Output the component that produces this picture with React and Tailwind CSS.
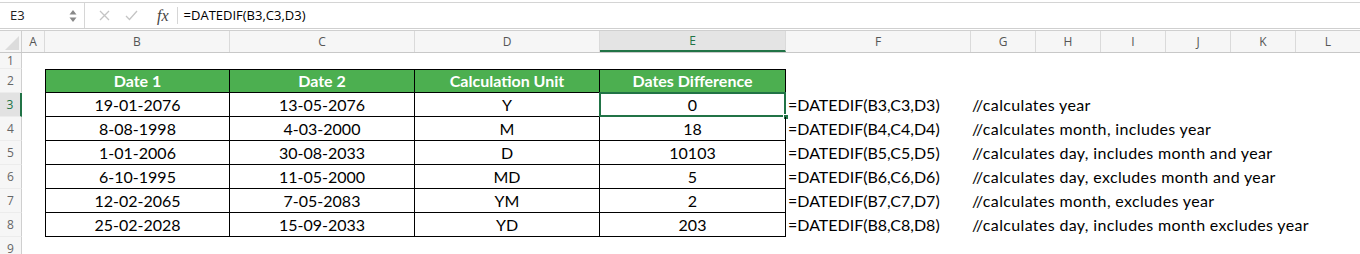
import React from 'react';

const cols = [
  { key: 'A', w: 23 },
  { key: 'B', w: 185 },
  { key: 'C', w: 185 },
  { key: 'D', w: 185 },
  { key: 'E', w: 186 },
  { key: 'F', w: 185 },
  { key: 'G', w: 65 },
  { key: 'H', w: 65 },
  { key: 'I', w: 65 },
  { key: 'J', w: 65 },
  { key: 'K', w: 65 },
  { key: 'L', w: 65 },
];

const headers = ['Date 1', 'Date 2', 'Calculation Unit', 'Dates Difference'];

const rows = [
  ['19-01-2076', '13-05-2076', 'Y', '0', '=DATEDIF(B3,C3,D3)', '//calculates year'],
  ['8-08-1998', '4-03-2000', 'M', '18', '=DATEDIF(B4,C4,D4)', '//calculates month, includes year'],
  ['1-01-2006', '30-08-2033', 'D', '10103', '=DATEDIF(B5,C5,D5)', '//calculates day, includes month and year'],
  ['6-10-1995', '11-05-2000', 'MD', '5', '=DATEDIF(B6,C6,D6)', '//calculates day, excludes month and year'],
  ['12-02-2065', '7-05-2083', 'YM', '2', '=DATEDIF(B7,C7,D7)', '//calculates month, excludes year'],
  ['25-02-2028', '15-09-2033', 'YD', '203', '=DATEDIF(B8,C8,D8)', '//calculates day, includes month excludes year'],
];

const cellFont = { fontFamily: 'Lato, "Open Sans", sans-serif' };

const RowHead = ({ n, h, active }) => (
  <div
    className={`w-[22px] shrink-0 flex items-center justify-center border-b border-[#ececec] text-[12px] ${
      active ? 'bg-[#e2e2e2] text-[#217346] border-r-2 border-r-[#217346]' : 'bg-[#f6f6f6] text-[#666] border-r border-r-[#cfcfcf]'
    } ${h}`}
    style={{ fontFamily: '"Open Sans", sans-serif' }}
  >
    {n}
  </div>
);

const FormulaBar = () => (
  <div className="h-[29px] border-t border-[#d4d4d4] mt-[2px] flex items-center bg-white border-b-[3px] border-b-[#cfcfcf] border-double">
    <div className="w-[85px] h-full flex items-center justify-between pl-[10px] pr-[7px] border-r border-[#d6d6d6]">
      <span className="text-[13px] text-[#222]" style={{ fontFamily: '"Open Sans", sans-serif' }}>E3</span>
      <svg width="8" height="16" viewBox="0 0 8 16">
        <path d="M4 2 L7.5 6.5 H0.5 Z" fill="#888" />
        <path d="M4 14 L7.5 9.5 H0.5 Z" fill="#888" />
      </svg>
    </div>
    <div className="flex items-center h-full">
      <svg className="ml-[14px]" width="11" height="11" viewBox="0 0 11 11">
        <path d="M1 1 L10 10 M10 1 L1 10" stroke="#c4c4c4" strokeWidth="1.3" />
      </svg>
      <svg className="ml-[15px]" width="13" height="11" viewBox="0 0 13 11">
        <path d="M1 6 L4.5 9.5 L12 1" stroke="#c4c4c4" strokeWidth="1.3" fill="none" />
      </svg>
      <span className="ml-[19px] text-[16px] italic text-[#444]" style={{ fontFamily: '"Liberation Serif", serif' }}>
        fx
      </span>
      <div className="ml-[8px] w-px h-[17px] bg-[#d6d6d6]" />
      <span className="ml-[6px] text-[13px] text-black" style={{ fontFamily: '"Open Sans", sans-serif' }}>
        =DATEDIF(B3,C3,D3)
      </span>
    </div>
  </div>
);

const ColumnHeader = () => (
  <div className="flex h-[22px] border-b border-[#c8c8c8] bg-[#f6f6f6]">
    <div className="w-[22px] shrink-0 relative border-r border-[#cfcfcf]">
      <svg className="absolute right-[2px] bottom-[2px]" width="14" height="14" viewBox="0 0 14 14">
        <path d="M14 0 L14 14 L0 14 Z" fill="#dcdcdc" />
      </svg>
    </div>
    {cols.map((c) => (
      <div
        key={c.key}
        className={`shrink-0 flex items-center justify-center text-[12px] border-r border-[#dadada] ${
          c.key === 'E' ? 'bg-[#e4e4e4] text-[#217346] border-b-2 border-b-[#217346]' : 'text-[#555]'
        }`}
        style={{ width: c.w, fontFamily: '"Open Sans", sans-serif' }}
      >
        {c.key}
      </div>
    ))}
  </div>
);

export default function App() {
  return (
    <div className="w-[1360px] h-[254px] overflow-hidden bg-white">
      <FormulaBar />
      <ColumnHeader />

      {/* row 1 */}
      <div className="flex">
        <RowHead n={1} h="h-[16px]" />
      </div>

      {/* row 2: table header */}
      <div className="flex h-[24px]">
        <RowHead n={2} h="h-[24px]" />
        <div className="w-[23px] shrink-0" />
        {headers.map((t, i) => (
          <div
            key={t}
            className={`shrink-0 flex items-center justify-center bg-[#4caf50] text-white font-bold text-[16px] border-t border-b border-r border-black ${
              i === 0 ? 'border-l' : ''
            }`}
            style={{ width: cols[i + 1].w, ...cellFont }}
          >
            {t}
          </div>
        ))}
      </div>

      {rows.map((r, ri) => (
        <div key={ri} className="flex h-[24px]">
          <RowHead n={ri + 3} h="h-[24px]" active={ri === 0} />
          <div className="w-[23px] shrink-0" />
          {r.slice(0, 4).map((v, ci) => (
            <div
              key={ci}
              className={`relative shrink-0 flex items-center justify-center text-black text-[16px] border-b border-r border-black ${
                ci === 0 ? 'border-l' : ''
              }`}
              style={{ width: cols[ci + 1].w, ...cellFont }}
            >
              {v}
              {ri === 0 && ci === 3 && (
                <>
                  <div className="absolute -left-px -top-px -right-px -bottom-px border-2 border-[#217346]" />
                  <div className="absolute -right-[4px] -bottom-[4px] w-[6px] h-[6px] bg-[#217346] border border-white" />
                </>
              )}
            </div>
          ))}
          <div
            className="w-[185px] shrink-0 flex items-center pl-[2px] text-[16px] text-black whitespace-nowrap"
            style={cellFont}
          >
            {r[4]}
          </div>
          <div
            className="flex-1 flex items-center pl-[1px] text-[16px] tracking-[0.35px] text-black whitespace-nowrap"
            style={cellFont}
          >
            {r[5]}
          </div>
        </div>
      ))}

      {/* row 9 */}
      <div className="flex">
        <RowHead n={9} h="h-[24px]" />
      </div>
    </div>
  );
}
